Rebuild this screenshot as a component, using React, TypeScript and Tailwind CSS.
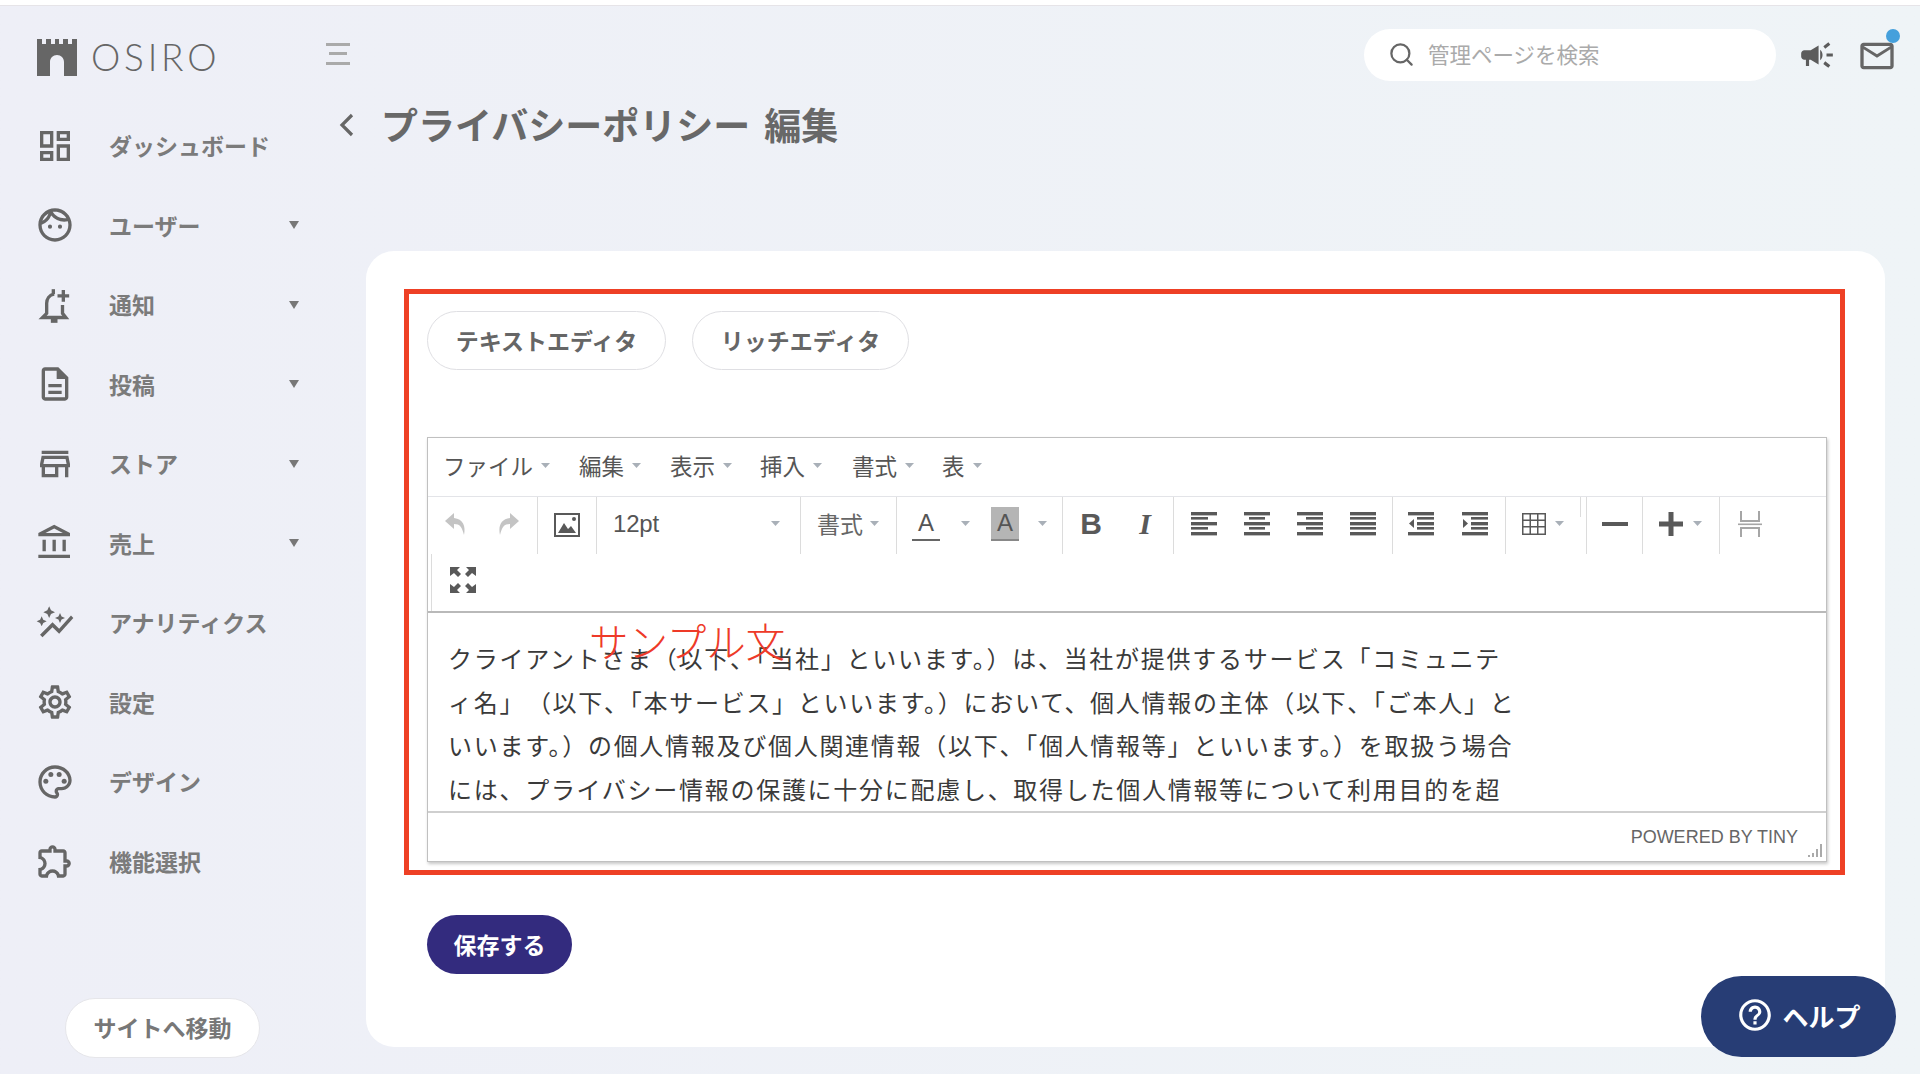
import React from "react";
import {
  MdOutlineDashboard, MdOutlineFace, MdOutlineDescription, MdOutlineStore,
  MdOutlineAccountBalance, MdOutlineAutoGraph, MdOutlineSettings, MdOutlinePalette, MdOutlineExtension,
  MdCampaign, MdOutlineMailOutline, MdOutlineHelpOutline,
} from "react-icons/md";
import { Search } from "lucide-react";

const BellPlus = ({ size, className }: { size?: number; className?: string }) => (
  <svg width={size} height={size} viewBox="0 0 24 24" className={className} fill="none" stroke="currentColor" strokeWidth="2">
    <path d="M11.5 5.5C8.5 6 7 8.5 7 11v6l-2.5 2.5h14L16.5 17v-5" />
    <path d="M11 2.5v3" />
    <path d="M9.5 21.5h4" strokeWidth="2.4" />
    <path d="M17 3v7M13.5 6.5h7" />
  </svg>
);

const nav: [React.ComponentType<{ size?: number; className?: string }>, string, boolean][] = [
  [MdOutlineDashboard, "ダッシュボード", false],
  [MdOutlineFace, "ユーザー", true],
  [BellPlus, "通知", true],
  [MdOutlineDescription, "投稿", true],
  [MdOutlineStore, "ストア", true],
  [MdOutlineAccountBalance, "売上", true],
  [MdOutlineAutoGraph, "アナリティクス", false],
  [MdOutlineSettings, "設定", false],
  [MdOutlinePalette, "デザイン", false],
  [MdOutlineExtension, "機能選択", false],
];

const Logo = () => (
  <svg width="40" height="37" viewBox="0 0 40 37" className="text-[#666]">
    <path fill="currentColor" d="M0 0h5v5h4V0h5v5h4V0h4v5h4V0h5v5h4V0h5v37H27V23c0-4-3-7-7-7s-7 3-7 7v14H0z" />
  </svg>
);

const Caret = () => (
  <svg width="10" height="8" viewBox="0 0 10 8" className="text-[#777]"><path fill="currentColor" d="M0 0h10L5 8z" /></svg>
);
const MiniCaret = ({ className = "" }: { className?: string }) => (
  <svg width="9" height="5" viewBox="0 0 9 5" className={className}><path fill="#a9b0b8" d="M0 0h9L4.5 5z" /></svg>
);

const I = ({ children, c = "#595959" }: { children: React.ReactNode; c?: string }) => (
  <svg width="28" height="28" viewBox="0 0 28 28" fill={c}>{children}</svg>
);
const Bars = ({ rows }: { rows: [number, number][] }) => (
  <I>
    {rows.map(([x, w], i) => (
      <rect key={i} x={x} y={2 + i * 5} width={w} height={i % 2 === 0 ? 3.4 : 2.6} />
    ))}
  </I>
);
const Undo = ({ flip }: { flip?: boolean }) => (
  <svg width="28" height="28" viewBox="0 0 28 28" fill="#c4c4c4" className={flip ? "-scale-x-100" : ""}>
    <path d="M12 3 3 11l9 8v-5c6 0 8 3 10 11 2-9-1-16-10-17z" />
  </svg>
);
const ImageIcon = () => (
  <I>
    <path fillRule="evenodd" d="M1 3h26v24H1zM3 5v20h22V5z" />
    <path d="M5 23l6-10 4 6 3-3 5 7z" />
    <circle cx="21" cy="9" r="2" />
  </I>
);
const Table = () => (
  <I>
    <path fillRule="evenodd" d="M2 3h24v22H2zM3.5 4.500v5h6v-5zm7.500 0v5h6v-5zm7.500 0v5h6v-5zM3.500 11v5h6v-5zm7.500 0v5h6v-5zm7.500 0v5h6v-5zM3.500 17.500v6h6v-6zm7.500 0v6h6v-6zm7.500 0v6h6v-6z" />
  </I>
);
const Full = () => (
  <I>
    <path d="M1 1h10L8 4l4 4-3 3-4-4-4 3zM27 1H17l3 3-4 4 3 3 4-4 4 3zM1 27h10l-3-3 4-4-3-3-4 4-4-3zM27 27H17l3-3-4-4 3-3 4 4 4-3z" />
  </I>
);
const PageBreak = () => (
  <I c="#a6a6a6">
    <path d="M4 1h2v9h16V1h2v11H4zM4 27h2v-8h16v8h2V17H4z" />
    <rect x="2" y="13.5" width="24" height="1.6" />
  </I>
);

const Sep = ({ w, className = "", children }: { w: string; className?: string; children?: React.ReactNode }) => (
  <div className={`${w} h-full shrink-0 flex items-center pb-[4px] border-r border-[#dcdcdc] ${className}`}>{children}</div>
);
const Cell = ({ w, children }: { w: string; children: React.ReactNode }) => (
  <div className={`${w} flex items-center justify-center shrink-0`}>{children}</div>
);

const lines = [
  "クライアントさま（以下、「当社」といいます。）は、当社が提供するサービス「コミュニテ",
  "ィ名」　（以下、「本サービス」といいます。）において、個人情報の主体（以下、「ご本人」と",
  "いいます。）の個人情報及び個人関連情報（以下、「個人情報等」といいます。）を取扱う場合",
  "には、プライバシー情報の保護に十分に配慮し、取得した個人情報等について利用目的を超",
];

export default function App() {
  return (
    <div className="relative w-[1920px] h-[1080px] overflow-hidden bg-white font-['Noto_Sans_CJK_JP','Liberation_Sans',sans-serif]">
      <div className="h-[6px] border-b border-[#e6e4e8]" />
      <div className="h-[1068px] flex bg-linear-to-r from-[#eeeff7] to-[#eff4f7]">
        <aside className="w-[320px] shrink-0">
          <div className="h-[99.75px] pt-[33px] pl-[37px] flex items-start gap-[14px]">
            <Logo />
            <span className="font-['Lato',sans-serif] font-light text-[37px] leading-[35px] tracking-[3.8px] text-[#666]">OSIRO</span>
          </div>
          {nav.map(([Icon, label, caret]) => (
            <div key={label} className="h-[79.5px] flex items-center pl-[35px] pr-[21px]">
              <Icon size={40} className="text-[#666] shrink-0" />
              <span className="ml-[34px] text-[23px] font-bold text-[#7b7b7b] whitespace-nowrap">{label}</span>
              {caret && <span className="ml-auto flex"><Caret /></span>}
            </div>
          ))}
          <div className="ml-[65px] mt-[97px] w-[195px] h-[60px] pb-[2px] rounded-full bg-white border border-[#e6e6ea] flex items-center justify-center text-[23px] font-bold text-[#777]">
            サイトへ移動
          </div>
        </aside>

        <main className="flex-1 min-w-0">
          <div className="h-[75px] pt-[23px] pl-[6px] pr-[23px] flex items-start">
            <svg width="24" height="22" viewBox="0 0 24 22" className="mt-[14px]">
              <path fill="#aaa" d="M0 0h24v3H0zM3 9h18v3H3zM0 19h24v3H0z" />
            </svg>
            <div className="ml-auto w-[412px] h-[52px] pb-[2px] rounded-full bg-white flex items-center pl-[24px] text-[21.5px] text-[#aaa] whitespace-nowrap">
              <Search size={27} strokeWidth={2} className="text-[#666] mr-[13px]" />
              管理ページを検索
            </div>
            <MdCampaign size={38} className="text-[#5c5c5c] ml-[22px] mt-[7px]" />
            <div className="relative ml-[21px] mt-[7px]">
              <MdOutlineMailOutline size={40} className="text-[#666]" />
              <span className="absolute right-[-3px] top-[-7px] w-[14px] h-[14px] rounded-full bg-[#45a0dc]" />
            </div>
          </div>
          <div className="h-[49px] mt-[19px] pl-[19px] flex items-center">
            <svg width="16" height="24" viewBox="0 0 16 24"><path d="M13 2 3 12l10 10" fill="none" stroke="#666" strokeWidth="3.2" /></svg>
            <h1 className="ml-[26px] text-[37px] font-bold text-[#686868] whitespace-nowrap">プライバシーポリシー<span className="ml-[14px]">編集</span></h1>
          </div>

          <section className="relative ml-[46px] mt-[102px] w-[1519px] h-[796px] rounded-[28px] bg-white pl-[38px] pt-[38px]">
            <div className="w-[1441px] h-[586px] border-[5px] border-[#ee4025] pl-[18px] pt-[17px]">
              <div className="flex gap-[26px] text-[23px] font-bold text-[#666]">
                <div className="w-[239px] h-[59px] rounded-full border border-[#dfdfe3] flex items-center justify-center whitespace-nowrap">テキストエディタ</div>
                <div className="w-[217px] h-[59px] rounded-full border border-[#dfdfe3] flex items-center justify-center whitespace-nowrap">リッチエディタ</div>
              </div>
              <div className="mt-[67px] w-[1400px] h-[425px] border border-[#c0c0c0] shadow-[1px_2px_3px_rgba(0,0,0,0.22)] flex flex-col text-[#444]">
                <div className="h-[59px] pb-[3px] border-b border-[#e3e4e8] flex items-center pl-[15px] text-[22.5px] text-[#555] shrink-0">
                  {[["ファイル", "w-[136px]"], ["編集", "w-[91px]"], ["表示", "w-[90px]"], ["挿入", "w-[92px]"], ["書式", "w-[90px]"], ["表", "w-[60px]"]].map(([t, w]) => (
                    <div key={t} className={`${w} flex items-center gap-[8px] whitespace-nowrap`}>{t}<MiniCaret /></div>
                  ))}
                </div>
                <div className="h-[57px] flex shrink-0">
                  <Sep w="w-[110px]" className="pl-[2px]"><Cell w="w-[52px]"><Undo /></Cell><Cell w="w-[52px]"><Undo flip /></Cell></Sep>
                  <Sep w="w-[59px]" className="justify-center"><ImageIcon /></Sep>
                  <Sep w="w-[204px]" className="pl-[16px] pr-[20px] justify-between text-[24px] tracking-[-0.2px] text-[#555] font-['Liberation_Sans',sans-serif]">12pt<MiniCaret /></Sep>
                  <Sep w="w-[96px]" className="pl-[16px] gap-[7px] text-[23px] text-[#666]">書式<MiniCaret /></Sep>
                  <Sep w="w-[166px]" className="pl-[15px]">
                    <span className="w-[28px] h-[34px] border-b-2 border-[#666] flex items-center justify-center text-[24px] leading-none text-[#555] font-['Liberation_Sans',sans-serif]">A</span>
                    <MiniCaret className="ml-[21px]" />
                    <span className="ml-[21px] w-[28px] h-[34px] bg-[#b5b5b5] border-b-2 border-[#888] flex items-center justify-center text-[24px] leading-none text-[#555] font-['Liberation_Sans',sans-serif]">A</span>
                    <MiniCaret className="ml-[19px]" />
                  </Sep>
                  <Sep w="w-[111px]" className="pl-[1px] text-[30px] text-[#595959] font-['Liberation_Sans',sans-serif]">
                    <Cell w="w-[54px]"><b>B</b></Cell>
                    <Cell w="w-[54px]"><i className="font-['Liberation_Serif',serif] font-bold">I</i></Cell>
                  </Sep>
                  <Sep w="w-[219px]" className="pl-[3px]">
                    <Cell w="w-[53px]"><Bars rows={[[1, 26], [1, 17], [1, 26], [1, 17], [1, 26]]} /></Cell>
                    <Cell w="w-[53px]"><Bars rows={[[1, 26], [6, 16], [1, 26], [6, 16], [1, 26]]} /></Cell>
                    <Cell w="w-[53px]"><Bars rows={[[1, 26], [10, 17], [1, 26], [10, 17], [1, 26]]} /></Cell>
                    <Cell w="w-[53px]"><Bars rows={[[1, 26], [1, 26], [1, 26], [1, 26], [1, 26]]} /></Cell>
                  </Sep>
                  <Sep w="w-[113px]" className="pl-[1px]">
                    <Cell w="w-[54px]">
                      <I><rect x="1" y="2" width="26" height="3.4" /><rect x="10" y="7" width="17" height="2.6" /><rect x="10" y="12" width="17" height="3.4" /><rect x="10" y="17" width="17" height="2.6" /><rect x="1" y="22" width="26" height="3.4" /><path d="M7 9v9l-5-4.5z" /></I>
                    </Cell>
                    <Cell w="w-[54px]">
                      <I><rect x="1" y="2" width="26" height="3.4" /><rect x="10" y="7" width="17" height="2.6" /><rect x="10" y="12" width="17" height="3.4" /><rect x="10" y="17" width="17" height="2.6" /><rect x="1" y="22" width="26" height="3.4" /><path d="M2 9v9l5-4.5z" /></I>
                    </Cell>
                  </Sep>
                  <Sep w="w-[81px]" className="relative pl-[14px] gap-[7px]">
                    <Table /><MiniCaret />
                    <span className="absolute right-[5px] top-0 w-px h-[20px] bg-[#dcdcdc]" />
                  </Sep>
                  <Sep w="w-[56px]" className="justify-center"><I><rect x="1" y="12" width="26" height="4" /></I></Sep>
                  <Sep w="w-[77px]" className="pl-[14px] gap-[8px]"><I><path d="M11.500 2h5v9.500H26v5h-9.500V26h-5v-9.500H2v-5h9.500z" /></I><MiniCaret /></Sep>
                  <div className="w-[60px] pb-[4px] flex items-center justify-center"><PageBreak /></div>
                </div>
                <div className="h-[59px] flex items-center shrink-0 border-b-2 border-[#b9b9b9]">
                  <div className="h-full w-[62px] ml-[3px] pb-[5px] border-l border-[#dcdcdc] flex items-center justify-center"><Full /></div>
                </div>
                <div className="h-[200px] shrink-0 border-b-2 border-[#cfcfcf] pl-[20px] pt-[23px] text-[24px] leading-[43.7px] tracking-[1.72px] text-[#3a3a3a] overflow-hidden">
                  {lines.map((l) => <div key={l} className="whitespace-nowrap">{l}</div>)}
                </div>
                <div className="flex-1 flex items-center justify-end pr-[28px] relative text-[18px] text-[#666] font-['Liberation_Sans',sans-serif]">
                  POWERED BY TINY
                  <svg width="16" height="16" viewBox="0 0 16 16" className="absolute right-[3px] bottom-[3px]">
                    <path fill="#aaa" d="M1 13h2v2H1zM5 11h2v4H5zM9 7h2v8H9zM13 2h2v13h-2z" />
                  </svg>
                </div>
              </div>
            </div>
            <div className="ml-[23px] mt-[40px] w-[145px] h-[59px] rounded-full bg-[#332b7e] flex items-center justify-center text-[23px] font-bold text-white">保存する</div>
            <div className="absolute left-[223px] top-[368px] text-[39.5px] leading-[42px] text-[#ee3a28] whitespace-nowrap font-light">サンプル文</div>
          </section>
        </main>
      </div>
      <div className="absolute left-[1701px] top-[976px] w-[195px] h-[81px] pb-[3px] rounded-full bg-[#273d75] flex items-center justify-center gap-[8px] text-white text-[26px] font-bold">
        <MdOutlineHelpOutline size={38} />
        ヘルプ
      </div>
    </div>
  );
}
